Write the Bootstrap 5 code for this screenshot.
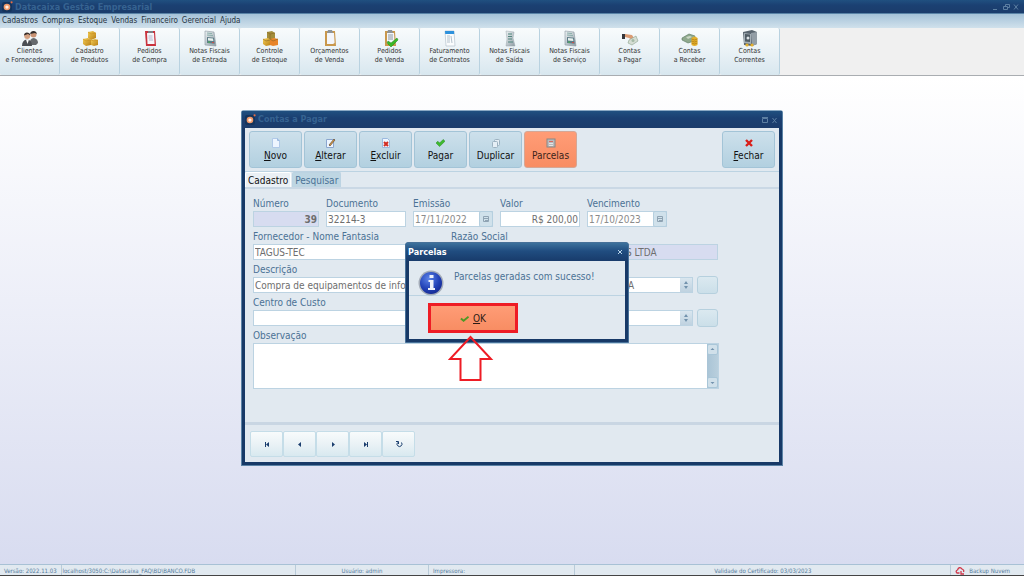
<!DOCTYPE html>
<html lang="pt-BR">
<head>
<meta charset="utf-8">
<meta name="viewport" content="width=device-width, initial-scale=1">
<title>Datacaixa Gestão Empresarial</title>
<link href="https://cdn.jsdelivr.net/npm/bootstrap@5.3.0/dist/css/bootstrap.min.css" rel="stylesheet">
<style>
:root{--navy-dark:#173967;--panel:#e1e9f0;--line:#bcd3e2;--ink:#4b7295;--gray:#6e6e6e}
body{font-family:"DejaVu Sans Condensed","DejaVu Sans",sans-serif;font-size:10px;line-height:13px;color:var(--ink)}
button{font:inherit;padding:0}
svg{display:block;flex:none}
.titlebar{background:linear-gradient(#205080,#1b4072 40%,#1b3c6b);color:#366391;font-weight:700}
.titlebar .caption-text{margin-left:2px}
.app-title{height:14px;font-size:9px;line-height:12px;border-bottom:1px solid #5882a6;padding:0 4px 0 2px}
.menu-strip{height:14px;background:linear-gradient(#a5c2d8,#d0e1ec);font-size:8px;line-height:14px;gap:4px;padding-left:2px}
.menu-strip a{color:#27333f;text-decoration:none}
.tools{background:#f0f0f0;border-bottom:1px solid #a9adb1;height:48px}
.tool{width:60px;height:47px;border:0;border-right:1px solid #b9d2e0;border-radius:2px;background:linear-gradient(#f8fbfc,#eaf2f6 50%,#d8e7ef);color:#333;font-size:7px;line-height:9px;padding:2px 0 10px}
.tool svg{width:20px;height:17px;margin:0 auto}
.desk{background:linear-gradient(#fff,#d8dcf0);padding-top:34px}
.win{width:542px;background:var(--navy-dark);padding:0 3px 3px;border-radius:3px 3px 0 0;border:1px solid #5b83a6;border-top-color:#8aa9c4}
.win-title{height:17px;margin:0 -3px;padding:0 4px 0 3px;font-size:9px}
.win-body{background:var(--panel)}
.cmds{height:44px;padding:3px 4px 0;border-bottom:1px solid var(--line);gap:2px}
.cmd{width:53px;height:37px;border:1px solid #a3c4d7;border-radius:3px;background:linear-gradient(#cde0eb,#b2d0e0);color:#111;font-size:10px;line-height:14px}
.cmd svg{margin:2px auto 1px}
.hot{background:linear-gradient(#ff9c76,#f88d63)}
.cmd.hot{color:#3c241b;border-color:#d5a796}
.tabs{height:17px;border-bottom:2px solid #cad8e5;gap:1px}
.tabs button{border:1px solid var(--line);border-bottom:0;height:15px;font-size:10px;line-height:13px;border-radius:2px 2px 0 0;padding:0 2px;color:var(--ink);background:#bed6e3}
.tabs .on{background:#eaf0f5;color:#111;border-color:#fff}
.form-area{padding:9px 61px 33px 8px}
.form-area label{display:block;height:13px;font-size:10px;line-height:12px;white-space:nowrap}
.form-area .box{display:block;width:100%;height:16px;border:1px solid var(--line);background:#fff;color:var(--gray);padding:0 1px;font-size:10px;line-height:13px;border-radius:0;appearance:none}
.form-area .ro{background:#d7dcf0}
.form-area .date{color:#8b8b8b}
.form-area .under-raz{padding-left:174px}
.form-area .under-sel{padding-left:176px}
.line-row{margin-bottom:4px}
.w66{flex:none;width:66px}.w80{flex:none;width:80px}.w190{flex:none;width:190px}
.rest{flex:1 1 0;min-width:0}
.g7{gap:7px}
.cal{width:14px;border:1px solid #b5cfdf;background:#d0e1eb;border-radius:2px}
.spin{width:12px;right:1px;top:1px;bottom:1px;background:linear-gradient(#d9e6ef,#bfd2e0);pointer-events:none}
.sq{flex:none;width:21px;height:18px;margin-bottom:-1px;border:1px solid #b6d0de;border-radius:3px;background:linear-gradient(#dbe9f0,#cbdfe9)}
.memo{height:46px;border:1px solid var(--line);background:#fff;margin-right:-1px}
.memo textarea{border:0;resize:none;outline:0;background:none}
.sbar{width:11px;background:linear-gradient(90deg,#a9c4d6,#b9cfdd)}
.sbar button{height:11px;border:1px solid #a9c6d8;border-radius:2px;background:#d0e0ea}
.pager{height:40px;border-top:3px solid #c9d6e3;padding:6px 5px}
.pager button{width:33px;height:26px;border:1px solid #c5dde8;border-radius:2px;background:linear-gradient(#f8fbfc,#eaf2f6 50%,#d8e9f0)}
.dlg{left:163px;top:131px;width:224px;background:var(--navy-dark);padding:0 3px 3px;border:1px solid #477199;border-radius:3px 3px 0 0}
.dlg .titlebar{height:18px;color:#fff;font-size:9px;margin:0 -3px;padding:0 5px 0 2px;background:linear-gradient(#3d719c,#204d80 45%,#183b6b)}
.dlg-msg{height:35px;background:var(--panel);border-bottom:1px solid var(--line);padding:9px 9px 0;gap:10px}
.dlg-foot{height:43px;background:var(--panel);padding:7px 19px}
.ok{width:90px;height:30px;border:3px solid #ee1c25;color:#2b1b15;font-size:10px}
.arrow{left:206px;top:223px}
.status{height:12px;background:#e1e9f0;border-top:1px solid #a8c1d5;border-bottom:1px solid #444;font-size:6px;line-height:11px;color:#547b9c}
.status>div{border-right:1px solid #b9cbd9;white-space:nowrap}
.c1{width:6.1%;padding-left:4px}.c2{width:22.8%}.c3{width:13%}.c4{width:14.3%;padding-left:4px}.c5{width:36.7%}
</style>
</head>
<body class="vh-100 d-flex flex-column overflow-hidden">
<svg width="0" height="0" class="position-absolute" aria-hidden="true">
<defs>
<linearGradient id="gold" x2="1" y2="1"><stop stop-color="#f4cf58"/><stop offset="1" stop-color="#b87d13"/></linearGradient>
<linearGradient id="steel" x2="1" y2="1"><stop stop-color="#eef3f5"/><stop offset="1" stop-color="#8e9ba3"/></linearGradient>
<radialGradient id="blue" cx=".4" cy=".3" r=".8"><stop stop-color="#5c83e8"/><stop offset=".6" stop-color="#2140b5"/><stop offset="1" stop-color="#13248a"/></radialGradient>
<symbol id="logo" viewBox="0 0 10 10"><rect y="1" width="9" height="9" rx="2" fill="#14345c"/><circle cx="4.5" cy="5.5" r="3" fill="#f09a6b"/><circle cx="4.5" cy="5.5" r="1.5" fill="#fff0e6"/><circle cx="8.7" cy="1.2" r="1" fill="#e66c42"/></symbol>
<symbol id="people" viewBox="0 0 18 17"><circle cx="12.5" cy="4.5" r="3" fill="#c99374"/><path d="M9.2 4C9 0 16 0 15.8 4L14 3Z" fill="#302c2b"/><path d="M9 15V11Q10 8 13 8Q17 9 17 13L15 15Z" fill="#65696e"/><circle cx="6.2" cy="6" r="3" fill="#d3a080"/><path d="M3 5.5C3 1 9.5 2 9.3 5.6L7 4Z" fill="#3a302c"/><path d="M1 16Q1 10 6 9.5Q11 10 11 16Z" fill="#4b4e53"/><path d="M5 9.5h3L6.5 14Z" fill="#fff"/></symbol>
<symbol id="boxes" viewBox="0 0 18 17"><path d="M7 2l5-1 3 2v5l-5 2-3-2Z" fill="url(#gold)"/><path d="M2 9l5-1 3 2v5l-5 1-3-2Z" fill="url(#gold)"/><path d="M10 10l4-1 3 1v5l-4 1-3-1Z" fill="url(#gold)"/><path d="M7 2l3 2 5-1M2 9l3 2 5-1M10 10l3 1 4-1" fill="none" stroke="#c98d1c" stroke-width=".6"/></symbol>
<symbol id="stock" viewBox="0 0 18 17"><path d="M6 2l5-1 3 2v5l-5 2-3-2Z" fill="#a38e3c"/><path d="M2 9l5-1 3 2v5l-5 1-3-2Z" fill="url(#gold)"/><path d="M9 9l4-1 4 1v6l-5 1-3-1Z" fill="#e8852a"/><path d="M6 2l3 2 5-1M9 4v5M2 9l3 2 4-1M9 9l3 2 5-2" fill="none" stroke="#8a6423" stroke-width=".6"/></symbol>
<symbol id="clipr" viewBox="0 0 18 17"><path d="M4 1h10l1 15H5Z" fill="#c9323d"/><path d="M6 3h7l.6 11H6.5Z" fill="#f5f5fa"/><path d="M7 1h5v2H7Z" fill="#7c8086"/><path d="M7.500 6h4M7.500 8h4M8 10h4" stroke="#b3b9cf"/></symbol>
<symbol id="clip" viewBox="0 0 18 17"><path d="M4 1h10l1 15H4Z" fill="#c9984c"/><path d="M6 3h7l.6 10-1.600 1H6Z" fill="#f3f5fa"/><path d="M7 0h4l1 3H6Z" fill="#8d9499"/></symbol>
<symbol id="clipok" viewBox="0 0 18 17"><path d="M4 1h10l1 15H4Z" fill="#c9984c"/><path d="M6 3h7l.6 10-1.600 1H6Z" fill="#f3f5fa"/><path d="M7 0h4l1 3H6Z" fill="#8d9499"/><path d="M7 5h5M7 7h5M7 9h5" stroke="#8c98a0"/><path d="M7 11l3 2 6-5 1 2-7 7-4-4Z" fill="#39b927" stroke="#238217" stroke-width=".5"/></symbol>
<symbol id="nf" viewBox="0 0 18 17"><path d="M4 1l9 1 2 14-11-1Z" fill="url(#steel)" stroke="#8c99a1" stroke-width=".6"/><path d="M6 3l5 .6M6 5l6 .6" stroke="#8bb0ab"/><path d="M6 7l7 .8.8 6L6 13Z" fill="#5d7d88"/><path d="M7 8l5 .6.4 2.500L7 10.500Z" fill="#e9f2ef"/><path d="M7 12l2 .2" stroke="#48b552"/><path d="M11 12.500l2 .1" stroke="#cf4e48"/></symbol>
<symbol id="cal2" viewBox="0 0 18 17"><path d="M4 1h9l1 15H5Z" fill="#fafcfd" stroke="#abbac6" stroke-width=".6"/><path d="M4 1h9l.2 3H4.200Z" fill="#2d91dc"/><path d="M6 6h3M6 8h3M6 10h3M6 12h3M10 6l1 7" stroke="#b4c2cc"/></symbol>
<symbol id="bill" viewBox="0 0 18 17"><path d="M5 1l8 1-1 6 2 8-9 0 1-7Z" fill="url(#steel)" stroke="#9aa6ac" stroke-width=".5"/><path d="M7 4h4M7 6.500h4M7 9h4M7 12h5" stroke="#51867e" stroke-width="1.200"/></symbol>
<symbol id="hand" viewBox="0 0 18 17"><path d="M1 4h3v5H1Z" fill="#34353b"/><path d="M4 4l7 1 2 3-2 2-3-2-4-1Z" fill="#db9b73"/><path d="M8 10l7-4 2 5-6 4-4-2Z" fill="#d5ddd3" stroke="#8ca18d" stroke-width=".6"/><circle cx="12" cy="10.500" r="1.500" fill="#a4b9a6"/></symbol>
<symbol id="money" viewBox="0 0 18 17"><path d="M1 8l7-4 6 2-1 5-6 2-6-3Z" fill="#8fa98d" stroke="#58765c" stroke-width=".6"/><path d="M5 7l4-1 2 1-4 2Z" fill="#cbd8c5"/><path d="M10.500 8q3-3 6 0v7q-3 2-6 0Z" fill="#e5b02b"/><path d="M10.500 9q3 2 6 0M10.500 11q3 2 6 0M10.500 13q3 2 6 0" fill="none" stroke="#a97711" stroke-width=".7"/></symbol>
<symbol id="safe" viewBox="0 0 18 17"><path d="M2 2l9-2 5 2v12l-5 2-8-1Z" fill="#59656f"/><path d="M10 3l6-1v12l-5 2Z" fill="#939ea6"/><path d="M3 3l7 1v10l-7-1Z" fill="#a4afb6"/><path d="M4 4l5 .5V12l-5-.5Z" fill="#505c65"/><circle cx="7" cy="8" r="1.500" fill="#dbe2e6"/><circle cx="6" cy="15" r="1.600" fill="#e5b02b"/><circle cx="11" cy="15" r="1.600" fill="#e5b02b"/></symbol>
<symbol id="check" viewBox="0 0 10 10"><path d="M0 5l2-2 2 2 4-4 2 2-6 6Z" fill="#3dbb2d" stroke="#217c18" stroke-width=".5"/></symbol>
<symbol id="tick" viewBox="0 0 10 10"><path d="M1 5l3 2.500L9.500 3" fill="none" stroke="#4d9a25" stroke-width="2.200"/></symbol>
</defs></svg>

<header>
<div class="titlebar app-title d-flex align-items-center">
<svg width="11" height="11"><use href="#logo"/></svg><span class="caption-text flex-grow-1">Datacaixa Gestão Empresarial</span>
<svg width="28" height="9" viewBox="0 0 28 9" fill="none" stroke="#5c7fa2"><path d="M1 7.500h4M11.500 4.500h4v3h-4zM13.500 4V2.500h4v3H16M22 2.500l4 5M26 2.500l-4 5"/></svg>
</div>
<nav class="menu-strip d-flex" aria-label="Principal"><a href="#">Cadastros</a><a href="#">Compras</a><a href="#">Estoque</a><a href="#">Vendas</a><a href="#">Financeiro</a><a href="#">Gerencial</a><a href="#">Ajuda</a></nav>
<div class="tools d-flex">
<button class="tool"><svg><use href="#people"/></svg>Clientes<br>e Fornecedores</button>
<button class="tool"><svg><use href="#boxes"/></svg>Cadastro<br>de Produtos</button>
<button class="tool"><svg><use href="#clipr"/></svg>Pedidos<br>de Compra</button>
<button class="tool"><svg><use href="#nf"/></svg>Notas Fiscais<br>de Entrada</button>
<button class="tool"><svg><use href="#stock"/></svg>Controle<br>de Estoque</button>
<button class="tool"><svg><use href="#clip"/></svg>Orçamentos<br>de Venda</button>
<button class="tool"><svg><use href="#clipok"/></svg>Pedidos<br>de Venda</button>
<button class="tool"><svg><use href="#cal2"/></svg>Faturamento<br>de Contratos</button>
<button class="tool"><svg><use href="#bill"/></svg>Notas Fiscais<br>de Saída</button>
<button class="tool"><svg><use href="#nf"/></svg>Notas Fiscais<br>de Serviço</button>
<button class="tool"><svg><use href="#hand"/></svg>Contas<br>a Pagar</button>
<button class="tool"><svg><use href="#money"/></svg>Contas<br>a Receber</button>
<button class="tool"><svg><use href="#safe"/></svg>Contas<br>Correntes</button>
</div>
</header>

<main class="desk flex-grow-1">
<section class="win position-relative mx-auto">
<div class="titlebar win-title d-flex align-items-center">
<svg width="11" height="11"><use href="#logo"/></svg><span class="caption-text flex-grow-1">Contas a Pagar</span>
<svg width="18" height="8" viewBox="0 0 18 8" fill="none" stroke="#5c7fa2"><path d="M2.500 2.500h5v4h-5zM2 1.500h6M12.500 2l4 5M16.500 2l-4 5"/></svg>
</div>
<div class="win-body">
<div class="cmds d-flex align-items-start">
<button class="cmd"><svg width="10" height="10"><path d="M1.500.5h5l2 2v7h-7z" fill="#edf5ff" stroke="#b0c9e8"/><path d="M6.500.5v2h2" fill="none" stroke="#9bb9df"/></svg><u>N</u>ovo</button>
<button class="cmd"><svg width="10" height="10"><path d="M.5 1.500h7v8h-7z" fill="#edf5ff" stroke="#8ba6cf"/><path d="M3 7l5-6 1 1-5 6z" fill="#e6a13c" stroke="#5c483a" stroke-width=".7"/></svg><u>A</u>lterar</button>
<button class="cmd"><svg width="10" height="10"><path d="M1.500.5h5l2 2v7h-7z" fill="#edf5ff" stroke="#9bb9df"/><path d="M3 4l4 4M7 4L3 8" stroke="#d22b22" stroke-width="2"/></svg><u>E</u>xcluir</button>
<button class="cmd"><svg width="9" height="10"><use href="#check"/></svg>Pagar</button>
<button class="cmd"><svg width="10" height="10" fill="#e6eff6" stroke="#9db2c1"><rect x="3.500" y="1.500" width="5" height="6" rx="1"/><rect x="1.500" y="3.500" width="5" height="6" rx="1"/></svg>Duplicar</button>
<button class="cmd hot"><svg width="10" height="10"><rect x="1" y="1" width="8" height="8" fill="#b9bbbe" stroke="#8a8784"/><path d="M3 3.500h4" stroke="#d86b60"/><path d="M3 5.500h4M3 7.500h4" stroke="#e4e4e4"/></svg>Parcelas</button>
<button class="cmd ms-auto"><svg width="10" height="10"><path d="M2 2l6 6M8 2L2 8" stroke="#d91e18" stroke-width="2.400"/></svg><u>F</u>echar</button>
</div>
<div class="tabs d-flex align-items-end" role="tablist"><button class="on" role="tab" aria-selected="true">Cadastro</button><button role="tab" aria-selected="false">Pesquisar</button></div>
<form class="form-area">
<div class="line-row d-flex g7">
<div class="w66"><label for="num">Número</label><input id="num" class="box ro text-end fw-bold" value="39" readonly></div>
<div class="w80"><label for="doc">Documento</label><input id="doc" class="box" value="32214-3"></div>
<div class="w80"><label for="emi">Emissão</label><div class="position-relative"><input id="emi" class="box date" value="17/11/2022"><button type="button" class="cal position-absolute top-0 end-0 h-100" aria-label="Calendário da emissão"><svg class="mx-auto" width="8" height="8" fill="none" stroke="#8fa3b3"><path d="M1.500 1.500h5v5h-5zM2 3.500h5M3 5.500h3"/></svg></button></div></div>
<div class="w80"><label for="val">Valor</label><input id="val" class="box text-end" value="R$ 200,00"></div>
<div class="w80"><label for="ven">Vencimento</label><div class="position-relative"><input id="ven" class="box date" value="17/10/2023"><button type="button" class="cal position-absolute top-0 end-0 h-100" aria-label="Calendário do vencimento"><svg class="mx-auto" width="8" height="8" fill="none" stroke="#8fa3b3"><path d="M1.500 1.500h5v5h-5zM2 3.500h5M3 5.500h3"/></svg></button></div></div>
</div>
<div class="line-row d-flex gap-2">
<div class="w190"><label for="forn">Fornecedor - Nome Fantasia</label><input id="forn" class="box" value="TAGUS-TEC"></div>
<div class="rest"><label for="raz">Razão Social</label><input id="raz" class="box ro under-raz" value="S LTDA" readonly></div>
</div>
<div class="line-row d-flex gap-2">
<div class="w190"><label for="desc">Descrição</label><input id="desc" class="box" value="Compra de equipamentos de info"></div>
<div class="rest d-flex align-items-end gap-1"><div class="rest position-relative"><select class="box under-sel" aria-label="Conta"><option>A</option></select><span class="spin position-absolute d-flex align-items-center justify-content-center"><svg width="6" height="8" fill="#7292ad"><path d="M3 0l2 3H1zM3 8l2-3H1z"/></svg></span></div><button type="button" class="sq" aria-label="Nova conta"></button></div>
</div>
<div class="line-row d-flex gap-2">
<div class="w190"><label for="cc">Centro de Custo</label><input id="cc" class="box"></div>
<div class="rest d-flex align-items-end gap-1"><div class="rest position-relative"><select class="box" aria-label="Opção"><option></option></select><span class="spin position-absolute d-flex align-items-center justify-content-center"><svg width="6" height="8" fill="#7292ad"><path d="M3 0l2 3H1zM3 8l2-3H1z"/></svg></span></div><button type="button" class="sq" aria-label="Nova opção"></button></div>
</div>
<label for="obs">Observação</label>
<div class="memo d-flex"><textarea id="obs" class="rest"></textarea><div class="sbar d-flex flex-column justify-content-between"><button type="button" aria-label="Subir"><svg class="mx-auto" width="5" height="5" fill="#7292ad"><path d="M2.500 1l2 2h-4z"/></svg></button><button type="button" aria-label="Descer"><svg class="mx-auto" width="5" height="5" fill="#7292ad"><path d="M2.500 4l2-2h-4z"/></svg></button></div></div>
</form>
<div class="pager d-flex">
<button aria-label="Primeiro"><svg class="mx-auto" width="8" height="8" fill="#1b3e6e"><path d="M2 2h1v5H2zM6 2v5L3 4.500z"/></svg></button>
<button aria-label="Anterior"><svg class="mx-auto" width="8" height="8" fill="#1b3e6e"><path d="M5 2v5L2 4.500z"/></svg></button>
<button aria-label="Próximo"><svg class="mx-auto" width="8" height="8" fill="#1b3e6e"><path d="M3 2v5l3-2.500z"/></svg></button>
<button aria-label="Último"><svg class="mx-auto" width="8" height="8" fill="#1b3e6e"><path d="M5 2h1v5H5zM2 2v5l3-2.500z"/></svg></button>
<button aria-label="Atualizar"><svg class="mx-auto" width="8" height="8" fill="none" stroke="#1b3e6e"><path d="M2.500 2.500a2.500 2.500 0 1 0 4 0M1 1.500h2.500V4"/></svg></button>
</div>
</div>

<div class="dlg position-absolute" role="dialog" aria-labelledby="dlg-t">
<div class="titlebar d-flex align-items-center justify-content-between"><span id="dlg-t">Parcelas</span><svg width="6" height="6" stroke="#b9d4e8"><path d="M1 1l4 4M5 1L1 5"/></svg></div>
<div class="dlg-msg d-flex"><svg width="26" height="26" viewBox="0 0 26 26"><circle cx="13" cy="13" r="12.500" fill="#a3abb8"/><circle cx="13" cy="13" r="11" fill="url(#blue)"/><path d="M11.500 5h4v3h-4zM10.500 10h5v8h1.500v2h-7v-2h2v-6h-1.500z" fill="#eef1fa"/></svg><span>Parcelas geradas com sucesso!</span></div>
<div class="dlg-foot"><button class="ok hot d-flex align-items-center justify-content-center"><svg width="9" height="9"><use href="#tick"/></svg><span class="ps-1"><u>O</u>K</span></button></div>
</div>
<svg class="arrow position-absolute" width="46" height="48" fill="none" stroke="#ee1c25" stroke-width="2"><path d="M22.500 3L43 25H32.500V46H12.500V25H2Z"/></svg>
</section>
</main>

<footer class="status d-flex">
<div class="c1">Versão: 2022.11.03</div><div class="c2">localhost/3050:C:\Datacaixa_FAQ\BD\BANCO.FDB</div><div class="c3 text-center">Usuário: admin</div><div class="c4">Impressora:</div><div class="c5 text-center">Validade do Certificado: 03/03/2023</div>
<div class="flex-grow-1 d-flex align-items-center border-0"><svg class="ms-1" width="10" height="9" fill="none" stroke="#d0394b" stroke-width="1.300"><path d="M4.500 7H2Q0 5 2.500 4Q4 0 7 3Q9.500 4 8.500 6M6 5v3h3"/></svg><span class="ms-1">Backup Nuvem</span></div>
</footer>
<script src="https://cdn.jsdelivr.net/npm/bootstrap@5.3.0/dist/js/bootstrap.bundle.min.js"></script>
</body>
</html>
